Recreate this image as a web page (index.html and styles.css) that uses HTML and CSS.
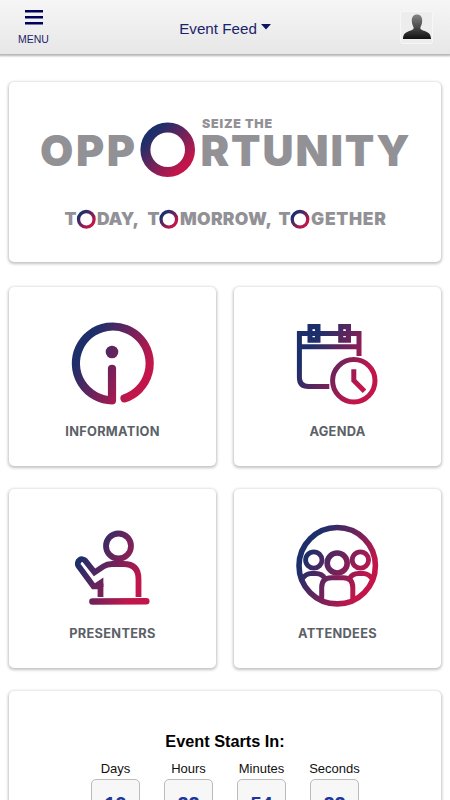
FILE: index.html
```html
<!DOCTYPE html>
<html lang="en">
<head>
    <meta charset="UTF-8">
    <meta name="viewport" content="width=device-width, initial-scale=1.0">
    <title>Event Feed</title>
    <link rel="stylesheet" href="styles.css">
</head>
<body>
    <!-- Top bar -->
    <header class="topbar">
        <button class="menu-btn">
            <svg class="menu-icon" width="18" height="15" viewBox="0 0 18 15">
                <path d="M0 1.3H18M0 7.3H18M0 13.3H18" stroke="#00005e" stroke-width="2.6"/>
            </svg>
            <span>MENU</span>
        </button>
        <div class="feed-title">
            <span>Event Feed</span>
            <svg width="10" height="6" viewBox="0 0 10 6"><path d="M0 0H10L5 5.6Z" fill="#0b1560"/></svg>
        </div>
        <div class="avatar">
            <svg width="30" height="26" viewBox="0 0 30 26">
                <defs>
                    <linearGradient id="avatarFill" x1="0" y1="0" x2="0" y2="1">
                        <stop offset="0" stop-color="#858585"/>
                        <stop offset="1" stop-color="#111"/>
                    </linearGradient>
                </defs>
                <path fill="url(#avatarFill)" d="M15 0.5C18.5 0.5 20.4 3.2 20.2 7C20 10.5 18.9 12 18.4 13.3C18 15 19 15.8 21 16.4C26 17.8 29 19.5 29 25H1C1 19.5 4 17.8 9 16.4C11 15.8 12 15 11.6 13.3C11.1 12 10 10.5 9.8 7C9.6 3.2 11.5 0.5 15 0.5Z"/>
            </svg>
        </div>
    </header>

    <main class="content">
        <!-- Banner -->
        <section class="card banner">
            <svg width="432" height="180" viewBox="0 0 432 180">
                <defs>
                    <linearGradient id="ring" x1="0.15" y1="0.15" x2="0.85" y2="0.85">
                        <stop offset="0" stop-color="#1c2f6b"/>
                        <stop offset="1" stop-color="#c2164b"/>
                    </linearGradient>
                </defs>
                <g class="logo-text">
                    <text x="193" y="46" font-size="12.4" textLength="70">SEIZE THE</text>
                    <text x="31" y="83.5" font-size="43" textLength="95">OPP</text>
                    <text x="191.5" y="83.5" font-size="43" textLength="209">RTUNITY</text>
                    <text x="55.5" y="143" font-size="17.5">T</text>
                    <text x="88" y="143" font-size="17.5" textLength="42">DAY,</text>
                    <text x="138.5" y="143" font-size="17.5">T</text>
                    <text x="171" y="143" font-size="17.5" textLength="92">MORROW,</text>
                    <text x="269.5" y="143" font-size="17.5">T</text>
                    <text x="302" y="143" font-size="17.5" textLength="75">GETHER</text>
                </g>
                <g fill="none" stroke="url(#ring)">
                    <circle cx="158.7" cy="67.8" r="22.3" stroke-width="10"/>
                    <circle cx="77.3" cy="137.3" r="7.8" stroke-width="3.3"/>
                    <circle cx="159.8" cy="137.3" r="7.8" stroke-width="3.3"/>
                    <circle cx="291" cy="137.3" r="7.8" stroke-width="3.3"/>
                </g>
            </svg>
        </section>

        <!-- Menu tiles -->
        <section class="tiles">
            <a class="card tile">
                <svg width="90" height="90" viewBox="0 0 90 90">
                    <defs>
                        <linearGradient id="brand" gradientUnits="userSpaceOnUse" x1="18" y1="28" x2="73" y2="60">
                            <stop offset="0" stop-color="#1c2f6b"/>
                            <stop offset="1" stop-color="#c2164b"/>
                        </linearGradient>
                    </defs>
                    <path class="line round" stroke-width="8.2" d="M57.5 79.4A36.9 36.9 0 1 0 45 81.3V49.8"/>
                    <circle class="solid" cx="45" cy="33" r="6.3"/>
                </svg>
                <span>INFORMATION</span>
            </a>
            <a class="card tile">
                <svg width="90" height="90" viewBox="0 0 90 90">
                    <path class="line" stroke-width="5" d="M67 37V14.6H7.4V58.5Q7.4 67.5 16.4 67.5H37.3M7.4 27.7H67"/>
                    <path class="solid" fill-rule="evenodd" d="M15.5 5H28.5V23.7H15.5ZM20.5 10.3V18.3H23V10.3ZM46.2 5H59V23.7H46.2ZM51.3 10.3V18.3H53.8V10.3Z"/>
                    <circle class="line" stroke-width="5" cx="61.8" cy="61.7" r="21.2"/>
                    <path class="line" stroke-width="5" d="M61.8 50.3V61.5L72.5 72.2"/>
                </svg>
                <span>AGENDA</span>
            </a>
            <a class="card tile">
                <svg width="90" height="90" viewBox="0 0 90 90">
                    <circle class="line" stroke-width="5.8" cx="51.5" cy="25" r="12.5"/>
                    <path class="line" stroke-width="5.8" d="M33.5 76V65.3H26.5L11.3 44.6A4.3 4.3 0 0 1 18.2 39.6L27.5 51.3L36.5 45.3Q40 43 45 43H56.5Q71.5 43 71.5 58V76"/>
                    <path class="solid" d="M36.4 56.5L26 63.5V66H36.4Z"/>
                    <path class="line round" stroke-width="6.5" d="M25.4 80.4L79.3 80.3"/>
                </svg>
                <span>PRESENTERS</span>
            </a>
            <a class="card tile">
                <svg width="90" height="90" viewBox="0 0 90 90">
                    <circle class="line" stroke-width="5.6" cx="45.2" cy="44.7" r="38.2"/>
                    <circle class="line" stroke-width="5.6" cx="45.2" cy="42" r="10"/>
                    <circle class="line" stroke-width="4.8" cx="21.8" cy="39" r="8.2"/>
                    <circle class="line" stroke-width="4.8" cx="68.4" cy="39" r="8.2"/>
                    <path class="line" stroke-width="5" d="M29.7 79V66.5Q29.7 56.7 39.5 56.7H51Q60.8 56.7 60.8 66.5V79"/>
                    <path class="line" stroke-width="5" d="M10 58Q14 52.5 19 52.5H24Q30 52.5 33 57.5M80.4 58Q76.4 52.5 71.4 52.5H66.4Q60.4 52.5 57.4 57.5"/>
                </svg>
                <span>ATTENDEES</span>
            </a>
        </section>

        <!-- Countdown -->
        <section class="card countdown">
            <h2>Event Starts In:</h2>
            <div class="units">
                <div class="unit"><span>Days</span><b>19</b></div>
                <div class="unit"><span>Hours</span><b>22</b></div>
                <div class="unit"><span>Minutes</span><b>54</b></div>
                <div class="unit"><span>Seconds</span><b>22</b></div>
            </div>
        </section>
    </main>
</body>
</html>
```
FILE: styles.css
```css
* {
    margin: 0;
    padding: 0;
    box-sizing: border-box;
}

body {
    height: 100vh;
    overflow: hidden;
    background: #fff;
    font-family: "Liberation Sans", Arial, sans-serif;
}

/* Top bar */
.topbar {
    display: grid;
    grid-template-columns: 67px 1fr 67px;
    height: 54px;
    background: linear-gradient(#f6f6f6, #e7e7e7);
    box-shadow: 0 1px 2px 1px rgba(0, 0, 0, 0.3);
    color: #1c2468;
}

.menu-btn {
    display: flex;
    flex-direction: column;
    align-items: center;
    gap: 7px;
    padding-top: 10px;
    border: none;
    background: none;
    color: #1c2468;
    font-family: inherit;
    font-size: 10.5px;
    line-height: 14px;
}

.feed-title {
    display: flex;
    justify-content: center;
    align-items: center;
    gap: 4px;
    padding-top: 2px;
    font-size: 15.2px;
}

.feed-title svg {
    margin-top: -2px;
}

.avatar {
    display: flex;
    justify-content: center;
    align-items: center;
    width: 33px;
    height: 33px;
    margin: 11px 0 0 17px;
    padding-bottom: 2px;
    border: 1px solid #f7f7f7;
    border-radius: 3px;
    background: #ededed;
}

/* Cards */
.content {
    padding: 28px 9px 0;
}

.card {
    background: #fff;
    border-radius: 5px;
    box-shadow: 0 1px 3px 1px rgba(0, 0, 0, 0.24);
}

.banner {
    height: 180px;
}

.banner svg {
    display: block;
}

.logo-text {
    fill: #929196;
    font-family: Inter, sans-serif;
    font-weight: 900;
}

.tiles {
    display: grid;
    grid-template-columns: 207px 207px;
    grid-auto-rows: 179px;
    gap: 23px 18px;
    margin: 25px 0 23px;
}

.tile {
    display: flex;
    flex-direction: column;
    align-items: center;
    padding-top: 32px;
    color: #5b6167;
    font-family: Inter, sans-serif;
    font-size: 12.8px;
    font-weight: 700;
    letter-spacing: 0.3px;
    line-height: 16px;
}

.tile svg {
    margin-right: 1px;
}

.tile span {
    margin-top: 15px;
}

.line {
    fill: none;
    stroke: url(#brand);
}

.round {
    stroke-linecap: round;
    stroke-linejoin: round;
}

.solid {
    fill: url(#brand);
}

/* Countdown */
.countdown {
    height: 180px;
    padding-top: 41px;
    text-align: center;
}

.countdown h2 {
    font-size: 16.3px;
    line-height: 18px;
    color: #000;
}

.units {
    display: flex;
    justify-content: center;
    gap: 24px;
    margin-top: 11px;
}

.unit {
    display: flex;
    flex-direction: column;
    align-items: center;
    width: 49px;
    font-size: 13px;
    line-height: 16px;
    color: #111;
}

.unit b {
    width: 49px;
    height: 49px;
    margin-top: 2px;
    padding-top: 13px;
    border: 1px solid #bbb;
    border-radius: 5px;
    background: #f7f7f7;
    color: #20359c;
    font-size: 20px;
    line-height: 23px;
}
```
